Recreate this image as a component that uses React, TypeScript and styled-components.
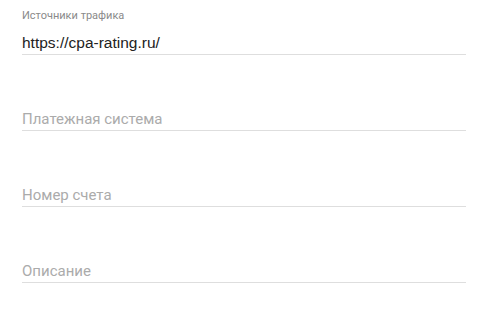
import styled, { createGlobalStyle } from 'styled-components';

const GlobalStyle = createGlobalStyle`
    html, body {
        margin: 0;
        padding: 0;
        background: #ffffff;
    }
`;

const Form = styled.form`
    width: 444px;
    padding: 9px 0 0 22px;
    display: flex;
    flex-direction: column;
    gap: 30px;
`;

const Field = styled.label`
    display: flex;
    flex-direction: column;
    gap: 8px;
`;

const Caption = styled.span<{ $shown: boolean }>`
    height: 14px;
    font-family: Roboto, 'Liberation Sans', sans-serif;
    font-size: 11px;
    line-height: 14px;
    color: #8a8a8a;
    visibility: ${(p) => (p.$shown ? 'visible' : 'hidden')};
`;

const Input = styled.input`
    box-sizing: content-box;
    height: 23px;
    padding: 0;
    margin: 0;
    border: 0;
    border-bottom: 1px solid #dedede;
    outline: none;
    background: transparent;
    font-family: 'Liberation Sans', Arial, sans-serif;
    font-size: 15.5px;
    line-height: 23px;
    color: #222222;

    &::placeholder {
        font-family: Roboto, 'Liberation Sans', sans-serif;
        font-size: 15px;
        color: #ababab;
    }
`;

const fields = [
    { name: 'source', caption: 'Источники трафика', value: 'https://cpa-rating.ru/' },
    { name: 'payment', caption: 'Платежная система', value: '' },
    { name: 'account', caption: 'Номер счета', value: '' },
    { name: 'description', caption: 'Описание', value: '' },
];

export default function App() {
    return (
        <>
            <GlobalStyle />
            <Form onSubmit={(e) => e.preventDefault()}>
                {fields.map((f) => (
                    <Field key={f.name}>
                        <Caption $shown={!!f.value}>{f.caption}</Caption>
                        <Input
                            name={f.name}
                            defaultValue={f.value}
                            placeholder={f.value ? '' : f.caption}
                        />
                    </Field>
                ))}
            </Form>
        </>
    );
}
